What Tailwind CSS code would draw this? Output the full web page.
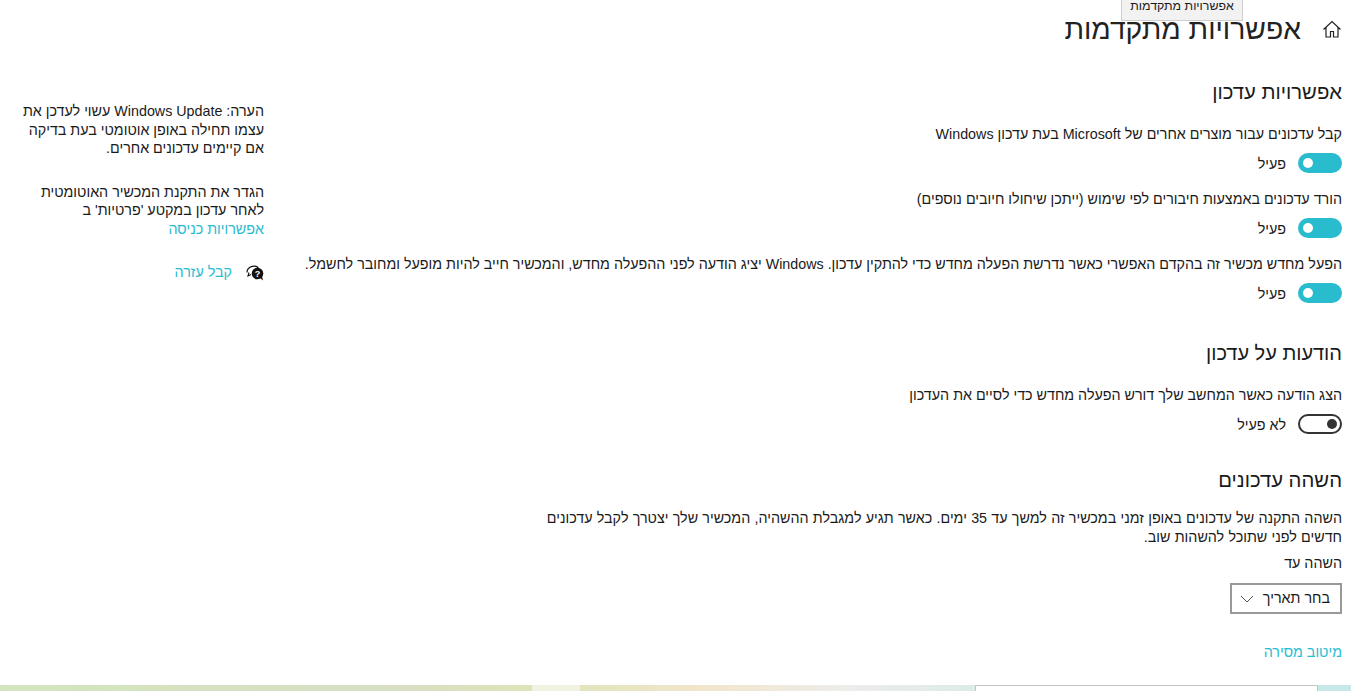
<!DOCTYPE html>
<html lang="he" dir="rtl">
<head>
<meta charset="utf-8">
<script src="https://cdn.jsdelivr.net/npm/@tailwindcss/browser@4"></script>
</head>
<body class="bg-white">
<div class="relative w-[1351px] h-[691px] overflow-hidden flex flex-col bg-white text-[#1a1a1a] font-['Liberation_Sans',sans-serif] text-[14.3px] leading-[19px]">
  <div class="absolute top-0 left-[1121px] w-[122px] h-[21px] bg-[#f2f2f2] border border-t-0 border-[#cfcfcf] text-[12.4px] leading-[12px] text-center">אפשרויות מתקדמות</div>
  <div class="flex-1 flex justify-between pr-[9px]">
    <main class="flex flex-col items-start">
      <header class="h-[59px] flex items-center gap-[21px] pb-[1px]">
        <svg class="w-[20px] h-[20px]" viewBox="0 0 20 20" fill="none" stroke="#222" stroke-width="1.2"><path d="M1.500 10.500 10 2.500l8.500 8M4 8.500V18h4.500v-5.500h3V18H16V8.500"/></svg>
        <h1 class="text-[28.3px] leading-[40px] text-[#222]">אפשרויות מתקדמות</h1>
      </header>
      <h2 class="mt-[20px] text-[20.3px] leading-[26px]">אפשרויות עדכון</h2>
      <p class="mt-[20px]">קבל עדכונים עבור מוצרים אחרים של Microsoft בעת עדכון Windows</p>
      <div class="mt-[9px] flex items-center gap-[12px] h-[20px]">
        <span class="w-[44px] h-[20px] rounded-full bg-[#29bccf] flex items-center justify-end px-[5px]"><span class="w-[10px] h-[10px] rounded-full bg-white"></span></span>
        <span class="pt-[2px]">פעיל</span>
      </div>
      <p class="mt-[17px]">הורד עדכונים באמצעות חיבורים לפי שימוש (ייתכן שיחולו חיובים נוספים)</p>
      <div class="mt-[9px] flex items-center gap-[12px] h-[20px]">
        <span class="w-[44px] h-[20px] rounded-full bg-[#29bccf] flex items-center justify-end px-[5px]"><span class="w-[10px] h-[10px] rounded-full bg-white"></span></span>
        <span class="pt-[2px]">פעיל</span>
      </div>
      <p class="mt-[17px] w-[1040px]">הפעל מחדש מכשיר זה בהקדם האפשרי כאשר נדרשת הפעלה מחדש כדי להתקין עדכון. Windows יציג הודעה לפני ההפעלה מחדש, והמכשיר חייב להיות מופעל ומחובר לחשמל.</p>
      <div class="mt-[9px] flex items-center gap-[12px] h-[20px]">
        <span class="w-[44px] h-[20px] rounded-full bg-[#29bccf] flex items-center justify-end px-[5px]"><span class="w-[10px] h-[10px] rounded-full bg-white"></span></span>
        <span class="pt-[2px]">פעיל</span>
      </div>
      <h2 class="mt-[37px] text-[20px] leading-[26px]">הודעות על עדכון</h2>
      <p class="mt-[20px]">הצג הודעה כאשר המחשב שלך דורש הפעלה מחדש כדי לסיים את העדכון</p>
      <div class="mt-[9px] flex items-center gap-[12px] h-[20px]">
        <span class="w-[44px] h-[20px] rounded-full border-2 border-[#333] flex items-center justify-start px-[3px]"><span class="w-[10px] h-[10px] rounded-full bg-[#333]"></span></span>
        <span class="pt-[2px]">לא פעיל</span>
      </div>
      <h2 class="mt-[33px] text-[20.3px] leading-[26px]">השהה עדכונים</h2>
      <p class="mt-[16px] w-[800px] [word-spacing:0.3px]">השהה התקנה של עדכונים באופן זמני במכשיר זה למשך עד 35 ימים. כאשר תגיע למגבלת ההשהיה, המכשיר שלך יצטרך לקבל עדכונים חדשים לפני שתוכל להשהות שוב.</p>
      <p class="mt-[7px]">השהה עד</p>
      <div class="mt-[10px] w-[112px] h-[31px] border-2 border-[#999] flex items-center justify-between pr-[10px] pl-[8px]">
        <span>בחר תאריך</span>
        <svg class="w-[14px] h-[8px]" viewBox="0 0 14 8" fill="none" stroke="#555" stroke-width="1"><path d="M1 1l6 6 6-6"/></svg>
      </div>
      <a class="mt-[29px] text-[#29bccf]">מיטוב מסירה</a>
    </main>
    <aside class="w-[246px] ml-[18px] mt-[102px] flex flex-col items-start leading-[18.6px]">
      <p>הערה: Windows Update עשוי לעדכן את עצמו תחילה באופן אוטומטי בעת בדיקה אם קיימים עדכונים אחרים.</p>
      <p class="mt-[25px]">הגדר את התקנת המכשיר האוטומטית לאחר עדכון במקטע 'פרטיות' ב</p>
      <a class="text-[#29bccf]">אפשרויות כניסה</a>
      <div class="mt-[24px] flex items-center gap-[14px] text-[#29bccf]">
        <svg class="w-[18px] h-[18px]" viewBox="0 0 18 18"><path d="M1 9.500C1 3 11 1 12.500 6" fill="none" stroke="#111" stroke-width="1.200"/><path d="M3 9.500 2 13l3-1.500" fill="none" stroke="#111" stroke-width="1.100"/><circle cx="11.500" cy="10.500" r="5.800" fill="#111"/><path d="M14 15l3 2.500-1-4z" fill="#111"/><text x="11.500" y="13.800" font-size="9" font-weight="700" fill="#fff" text-anchor="middle">?</text></svg>
        <span>קבל עזרה</span>
      </div>
    </aside>
  </div>
  <div class="h-[6px] flex shrink-0 [direction:ltr] bg-[linear-gradient(90deg,#d3e5bf_0%,#d8dfc3_30%,#dde5b8_40%,#f1e5cc_52%,#ededeb_63%,#dcebe6_72%,#c5e8e8_100%)]">
    <div class="w-[532px]"></div>
    <div class="w-[48px] bg-[#f1f3e2]"></div>
    <div class="w-[395px]"></div>
    <div class="w-[343px] bg-white border-x border-t border-[#c4c4c4]"></div>
  </div>
</div>
</body>
</html>
